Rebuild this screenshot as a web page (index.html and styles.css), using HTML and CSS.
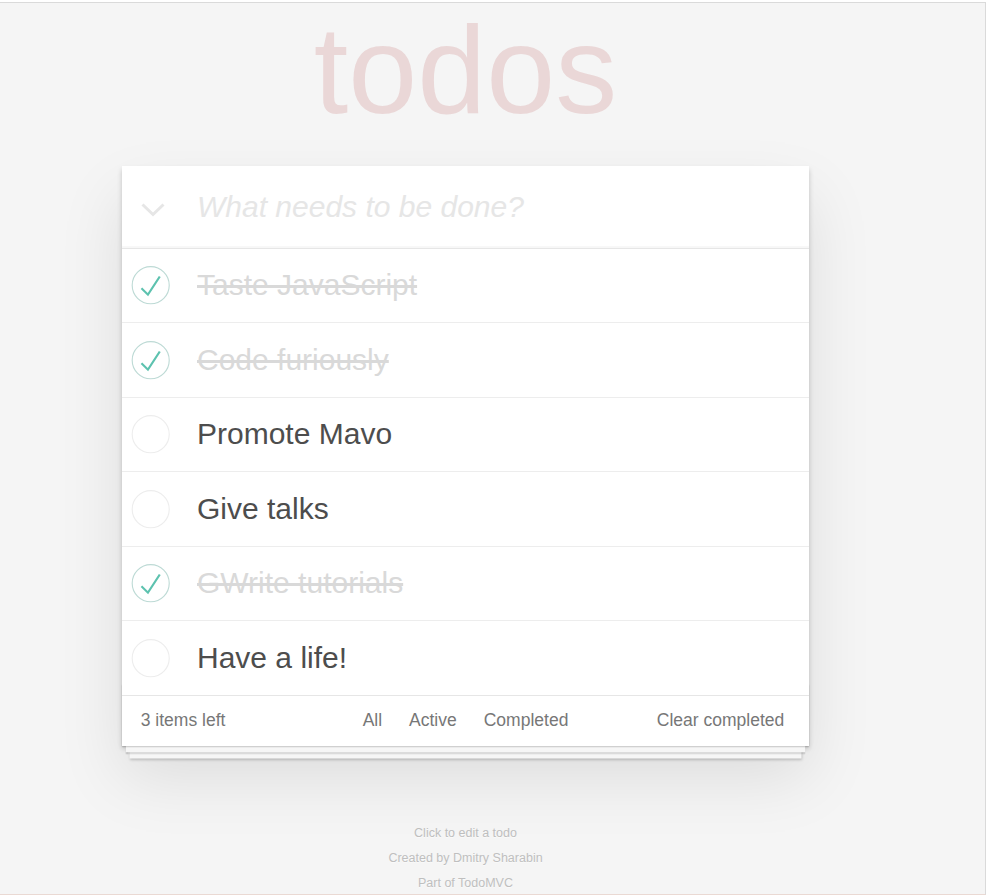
FILE: index.html
```html
<!DOCTYPE html>
<html lang="en">
<head>
<meta charset="utf-8">
<title>Mavo • TodoMVC</title>
<link rel="stylesheet" href="styles.css">
</head>
<body>
<div class="frame">
  <div class="page">
    <h1 class="title">todos</h1>
    <section class="todoapp">
      <header class="new-row">
        <span class="toggle-all">
          <svg width="24" height="14" viewBox="0 0 24 14"><polyline points="1.5,1.5 12,11.5 22.5,1.5" fill="none" stroke="#e6e6e6" stroke-width="3"/></svg>
        </span>
        <input class="new-todo" placeholder="What needs to be done?">
      </header>
      <ul class="todo-list">
        <li class="todo done">
          <span class="toggle"><svg width="50" height="50" viewBox="-10 -18 100 135"><circle cx="50" cy="50" r="50" fill="none" stroke="#bddad5" stroke-width="3"/><path fill="#5dc2af" d="M72 25L42 71 27 56l-4 4 20 20 34-52z"/></svg></span>
          <label class="label">Taste JavaScript</label>
        </li>
        <li class="todo done">
          <span class="toggle"><svg width="50" height="50" viewBox="-10 -18 100 135"><circle cx="50" cy="50" r="50" fill="none" stroke="#bddad5" stroke-width="3"/><path fill="#5dc2af" d="M72 25L42 71 27 56l-4 4 20 20 34-52z"/></svg></span>
          <label class="label">Code furiously</label>
        </li>
        <li class="todo">
          <span class="toggle"><svg width="50" height="50" viewBox="-10 -18 100 135"><circle cx="50" cy="50" r="50" fill="none" stroke="#ededed" stroke-width="3"/></svg></span>
          <label class="label">Promote Mavo</label>
        </li>
        <li class="todo">
          <span class="toggle"><svg width="50" height="50" viewBox="-10 -18 100 135"><circle cx="50" cy="50" r="50" fill="none" stroke="#ededed" stroke-width="3"/></svg></span>
          <label class="label">Give talks</label>
        </li>
        <li class="todo done">
          <span class="toggle"><svg width="50" height="50" viewBox="-10 -18 100 135"><circle cx="50" cy="50" r="50" fill="none" stroke="#bddad5" stroke-width="3"/><path fill="#5dc2af" d="M72 25L42 71 27 56l-4 4 20 20 34-52z"/></svg></span>
          <label class="label">GWrite tutorials</label>
        </li>
        <li class="todo">
          <span class="toggle"><svg width="50" height="50" viewBox="-10 -18 100 135"><circle cx="50" cy="50" r="50" fill="none" stroke="#ededed" stroke-width="3"/></svg></span>
          <label class="label">Have a life!</label>
        </li>
      </ul>
      <footer class="app-footer">
        <span class="todo-count">3 items left</span>
        <ul class="filters">
          <li><a class="filter">All</a></li>
          <li><a class="filter">Active</a></li>
          <li><a class="filter">Completed</a></li>
        </ul>
        <span class="clear-completed">Clear completed</span>
      </footer>
    </section>
    <footer class="info">
      <p>Click to edit a todo</p>
      <p>Created by Dmitry Sharabin</p>
      <p>Part of TodoMVC</p>
    </footer>
  </div>
</div>
</body>
</html>
```
FILE: styles.css
```css
html, body {
  margin: 0;
  padding: 0;
  background: #fff;
}

body {
  font-family: "Liberation Sans", Arial, sans-serif;
  font-weight: 300;
  color: #4d4d4d;
  line-height: 1.4;
}

.frame {
  margin-top: 2px;
  width: 986px;
  height: 893px;
  box-sizing: border-box;
  background: #f5f5f5;
  border-top: 1px solid #dadada;
  border-right: 1px solid #dadada;
  border-bottom: 1px solid #ead9d3;
}

.page {
  width: 687px;
  margin-left: 122px;
}

.title {
  margin: -2.5px 0 26.5px;
  font-size: 124px;
  line-height: 138.5px;
  font-weight: normal;
  text-align: center;
  color: rgba(175, 47, 47, 0.15);
  text-rendering: optimizeLegibility;
}

.todoapp {
  position: relative;
  background: #fff;
  box-shadow: 0 2.5px 5px 0 rgba(0, 0, 0, 0.2), 0 31px 62px 0 rgba(0, 0, 0, 0.1);
}

.new-row {
  display: flex;
  align-items: center;
  height: 82px;
  box-shadow: inset 0 -2px 1px rgba(0, 0, 0, 0.03);
}

.toggle-all {
  width: 75px;
  flex: none;
  display: flex;
  justify-content: flex-start;
  padding-left: 19px;
  padding-top: 6px;
  box-sizing: border-box;
}

.toggle-all svg {
  display: block;
}

.new-todo {
  flex: 1;
  min-width: 0;
  border: none;
  outline: none;
  background: transparent;
  font-family: inherit;
  font-size: 30px;
  font-weight: 300;
  line-height: 42px;
  padding: 0 20px 0 0;
  color: #4d4d4d;
}

.new-todo::placeholder {
  font-style: italic;
  color: #e6e6e6;
}

.todo-list {
  margin: 0;
  padding: 0;
  list-style: none;
  border-top: 1px solid #e6e6e6;
}

.todo {
  display: flex;
  align-items: center;
  border-bottom: 1px solid #ededed;
  font-size: 30px;
}

.todo:last-child {
  border-bottom: none;
}

.toggle {
  width: 50px;
  flex: none;
  display: flex;
  align-items: center;
}

.toggle svg {
  display: block;
}

.label {
  display: block;
  flex: 1;
  margin-left: 6.25px;
  padding: 18.75px 75px 18.75px 18.75px;
  line-height: 1.2;
  color: #4d4d4d;
  word-break: break-all;
}

.done .label {
  color: #d9d9d9;
  text-decoration: line-through;
}

.app-footer {
  position: relative;
  display: grid;
  grid-template-columns: 1fr auto 1fr;
  align-items: center;
  color: #777;
  font-size: 17.5px;
  line-height: 25px;
  height: 25px;
  padding: 11.5px 18.75px 13.5px;
  border-top: 1px solid #e6e6e6;
}

.app-footer::before {
  content: "";
  position: absolute;
  left: 0;
  right: 0;
  bottom: 0;
  height: 62px;
  overflow: hidden;
  pointer-events: none;
  box-shadow: 0 1.25px 1.25px rgba(0, 0, 0, 0.2),
              0 10px 0 -3.75px #f6f6f6,
              0 11.25px 1.25px -3.75px rgba(0, 0, 0, 0.2),
              0 20px 0 -7.5px #f6f6f6,
              0 21.25px 2.5px -7.5px rgba(0, 0, 0, 0.2);
}

.todo-count {
  justify-self: start;
}

.filters {
  display: flex;
  margin: 0;
  padding: 0;
  list-style: none;
}

.filter {
  display: block;
  margin: 0 3.75px;
  padding: 0 8.75px;
  border: 1px solid transparent;
  border-radius: 3.75px;
  color: inherit;
  text-decoration: none;
  line-height: 25px;
}

.clear-completed {
  justify-self: end;
  padding-right: 6px;
}

.info {
  margin: 81.25px 0 0;
  color: #bfbfbf;
  font-size: 12.5px;
  text-align: center;
  text-shadow: 0 1px 0 rgba(255, 255, 255, 0.5);
}

.info p {
  margin: 12.5px 0;
  line-height: 1;
}
```
